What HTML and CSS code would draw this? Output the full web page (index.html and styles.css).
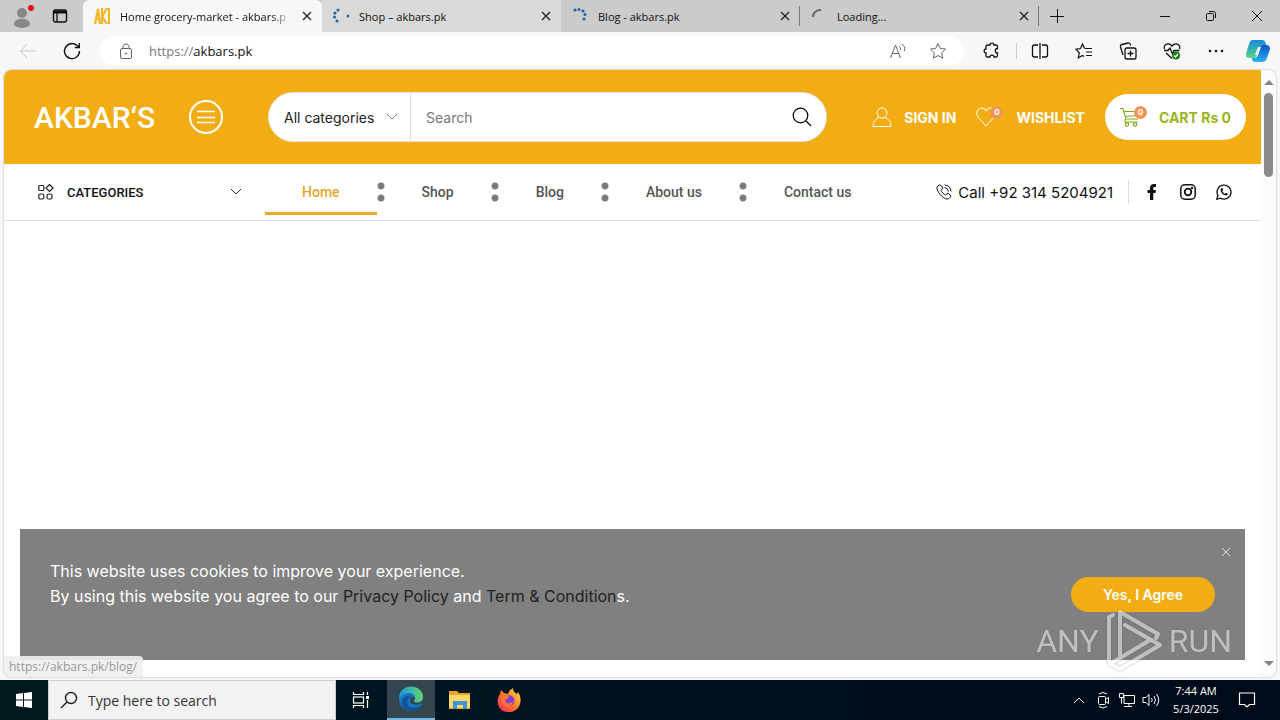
FILE: index.html
```
<!DOCTYPE html>
<html lang="en">
<head>
  <meta charset="UTF-8" />
  <meta name="viewport" content="width=device-width, initial-scale=1.0" />
  <title>Home grocery-market - akbars.pk</title>
  <link rel="stylesheet" href="styles.css">
</head>
<body>
  <!-- Tabs -->
  <div class="tabbar">
    <button class="profile" aria-label="Profile">
      <svg width="24" height="28" viewBox="0 0 24 28"><circle cx="12" cy="11" r="5" fill="#8a8785"/><path d="M4 22c0-7 16-7 16 0 0 5-16 5-16 0z" fill="#8a8785"/><circle cx="21" cy="6" r="3" fill="#e00b1c"/></svg>
    </button>
    <button class="workspaces" aria-label="Tab actions">
      <svg width="16" height="16" viewBox="0 0 16 16" fill="none" stroke="#111"><rect x="1.500" y="2" width="13" height="12" rx="2" stroke-width="1.400"/><path d="M2 4h12" stroke-width="3"/><path d="M5 4v10" stroke-width="1.300"/></svg>
    </button>
    <div class="tab active">
      <svg class="favicon" width="16" height="16" viewBox="0 0 16 16" fill="none" stroke="#f4b62a" stroke-width="2.200"><path d="M1 16 4 1l2 15M2 11h4M8 0v16M13 0 8 9l5 7M15 0v16"/></svg>
      <a href="#" class="tab-title fade">Home grocery-market - akbars.p</a>
      <button class="tab-close" aria-label="Close tab"><svg width="10" height="10" viewBox="0 0 10 10"><path d="M1 1l8 8M9 1l-8 8"/></svg></button>
    </div>
    <div class="tab hover">
      <svg class="favicon" width="16" height="16" viewBox="0 0 16 16" fill="#22639a"><circle cx="5" cy="2" r="1.500"/><circle cx="2" cy="5" r="1.600"/><circle cx="1.600" cy="9" r="1.500"/><circle cx="4" cy="13" r="1.500"/><circle cx="15" cy="8" r="1.500"/></svg>
      <a href="#" class="tab-title">Shop – akbars.pk</a>
      <button class="tab-close" aria-label="Close tab"><svg width="10" height="10" viewBox="0 0 10 10"><path d="M1 1l8 8M9 1l-8 8"/></svg></button>
    </div>
    <div class="tab line">
      <svg class="favicon" width="16" height="16" viewBox="0 0 16 16" fill="#1766a8"><circle cx="3" cy="2" r="1.600"/><circle cx="7" cy="1.600" r="1.500"/><circle cx="11" cy="3" r="1.600"/><circle cx="13" cy="6.500" r="1.500"/><circle cx="12" cy="11" r="1.500"/></svg>
      <a href="#" class="tab-title">Blog - akbars.pk</a>
      <button class="tab-close" aria-label="Close tab"><svg width="10" height="10" viewBox="0 0 10 10"><path d="M1 1l8 8M9 1l-8 8"/></svg></button>
    </div>
    <div class="tab line">
      <svg class="favicon" width="16" height="16" viewBox="0 0 16 16" fill="none" stroke="#666" stroke-width="2.200"><path d="M2 9c0-4 3-7 8-7"/></svg>
      <a href="#" class="tab-title">Loading...</a>
      <button class="tab-close" aria-label="Close tab"><svg width="10" height="10" viewBox="0 0 10 10"><path d="M1 1l8 8M9 1l-8 8"/></svg></button>
    </div>
    <button class="new-tab" aria-label="New tab"><svg width="14" height="14" viewBox="0 0 14 14" stroke="#111"><path d="M0 7.500h14M7.500 0v14"/></svg></button>
    <div class="window-buttons">
      <button aria-label="Minimize"><svg width="12" height="12" viewBox="0 0 12 12"><path d="M1 6.500h10"/></svg></button>
      <button aria-label="Restore"><svg width="12" height="12" viewBox="0 0 12 12"><rect x="1.500" y="3.500" width="7" height="7" rx="1"/><path d="M4 1.500h4.500q2 0 2 2V8"/></svg></button>
      <button aria-label="Close"><svg width="12" height="12" viewBox="0 0 12 12"><path d="M1 1l10 10M11 1 1 11"/></svg></button>
    </div>
  </div>

  <!-- Address bar -->
  <div class="toolbar">
    <button class="tool nav-btn" aria-label="Back"><svg width="18" height="16" viewBox="0 0 18 16" stroke="#c4c4c4"><path d="M17 8H2M8 1 1.500 8 8 15"/></svg></button>
    <button class="tool nav-btn" aria-label="Refresh"><svg width="18" height="18" viewBox="0 0 18 18" stroke-width="1.400"><path d="M16.500 9A7.500 7.500 0 1 1 14 3.500L16 5M16.300 1v4.500h-4.500"/></svg></button>
    <div class="address">
      <svg width="14" height="16" viewBox="0 0 14 16" fill="none" stroke="#666"><rect x="1.500" y="5.500" width="11" height="10" rx="1.500"/><path d="M4 5V4c0-4 6-4 6 0v1"/><circle cx="7" cy="10.500" r=".7"/></svg>
      <a href="#" class="url"><span>https://</span>akbars.pk</a>
      <button class="tool" aria-label="Read aloud"><svg width="18" height="16" viewBox="0 0 18 16" stroke="#666"><path d="M1.500 15 6.500 2l5 13M3.500 10.500h6M10 3q2 1 1.500 4M12.500 1q4 2 3 7"/></svg></button>
      <button class="tool" aria-label="Add to favorites"><svg width="18" height="18" viewBox="0 0 18 18" stroke="#666"><path d="m9 1.500 2.300 4.900 5.200.7-3.800 3.700.9 5.300L9 13.600l-4.600 2.500.9-5.300L1.500 7.100l5.200-.7z"/></svg></button>
    </div>
    <button class="tool" aria-label="Extensions"><svg width="18" height="18" viewBox="0 0 18 18" stroke-width="1.300"><path d="M4.500 3H7c0-2.500 4-2.500 4 0h2q1.500 0 1.500 1.500v2c-3 0-3 4.500 0 4.500v2.500q0 1.500-1.500 1.500h-2c0-2.500-4-2.500-4 0H4.500Q3 15 3 13.500V11c-2.500 0-2.500-4 0-4V4.500Q3 3 4.500 3z"/></svg></button>
    <span class="divider"></span>
    <button class="tool" aria-label="Split screen"><svg width="18" height="18" viewBox="0 0 18 18" stroke-width="1.300"><path d="M7 3H3.500Q1.500 3 1.500 5v8q0 2 2 2H7M11 3h3.500q2 0 2 2v8q0 2-2 2H11M9 1v16"/></svg></button>
    <button class="tool" aria-label="Favorites"><svg width="18" height="18" viewBox="0 0 18 18" stroke-width="1.200"><path d="M9.500 6.500 7.500 2l-2 4.500-4.500.8 3.300 3.500-1 5 4.200-2.300 1.500 1M10 6.500h7M11 10h6M11 13.500h6"/></svg></button>
    <button class="tool" aria-label="Collections"><svg width="18" height="18" viewBox="0 0 18 18" stroke-width="1.300"><rect x="6" y="6" width="11" height="11" rx="2"/><path d="M11.500 8.500v6M8.500 11.500h6M4 13 1.500 5q-.5-2 1.500-2.500L9 1q2-.5 2.800 2.500"/></svg></button>
    <button class="tool" aria-label="Browser essentials"><svg width="18" height="18" viewBox="0 0 18 18" stroke-width="1.300"><path d="M1.500 7C0 2 6 0 9 4c3-4 9-2 7.500 3M1 8.500h4L7 6l2.500 6L11 8.500h5.500M3 11l6 5.500"/><circle cx="13" cy="13.500" r="4" fill="#158015" stroke="none"/><path d="m11 13.500 1.500 1.500 2.500-3" stroke="#fff"/></svg></button>
    <button class="tool" aria-label="Settings and more"><svg width="18" height="18" viewBox="0 0 18 18" stroke="none"><g fill="#111"><circle cx="3" cy="9" r="1.300"/><circle cx="9" cy="9" r="1.300"/><circle cx="15" cy="9" r="1.300"/></g></svg></button>
    <button class="copilot" aria-label="Copilot">
      <svg width="24" height="22" viewBox="0 0 24 22"><defs><linearGradient id="cl" x2="0" y2="1"><stop stop-color="#1687d9"/><stop offset="1" stop-color="#5ad68b"/></linearGradient><linearGradient id="cr" x2="0" y2="1"><stop stop-color="#1250c4"/><stop offset="1" stop-color="#27b5f4"/></linearGradient></defs><path d="M7 0h9q3 0 4 4l1 3h-4q-3 0-4 3l-2 5q-1 3-4 3H3q-4 0-3-4L3 4q1-4 4-4z" fill="url(#cl)"/><path d="M17 5h3q4 0 4 4l-3 9q-1 4-5 4H9q-3 0-3-4h2q3 0 4-3l2-7q1-3 3-3z" fill="url(#cr)"/><path d="M12 7h3l-3 8H9z" fill="#e7f7ff"/></svg>
    </button>
  </div>

  <div class="browser-view">
    <div class="page">
      <header class="header">
        <a href="#" class="logo">AKBAR‘S</a>
        <button class="menu-btn" aria-label="Menu"><svg width="34" height="34" viewBox="0 0 34 34" fill="none" stroke="#fff"><circle cx="17" cy="17" r="16" stroke-width="2"/><path d="M8 11.500h18M8 17.500h18M8 22.500h18" stroke-width="1.300"/></svg></button>
        <form class="search">
          <label class="search-cat">
            <select aria-label="Category"><option>All categories</option></select>
            <svg width="12" height="8" viewBox="0 0 12 8" fill="none" stroke="#888"><path d="m1 1 5 5 5-5"/></svg>
          </label>
          <input type="text" placeholder="Search" aria-label="Search">
          <button type="button" aria-label="Search"><svg width="20" height="20" viewBox="0 0 20 20" fill="none" stroke="#000" stroke-width="1.200"><circle cx="8.500" cy="8.500" r="7.300"/><path d="m14 14 5 5"/></svg></button>
        </form>
        <a href="#" class="account">
          <svg width="20" height="20" viewBox="0 0 20 20" fill="none" stroke="#fff"><circle cx="10" cy="6" r="5"/><path d="M7 10.500C3 12 1 15 1 19.500h18c0-4.500-2-7.500-6-9"/></svg>
          Sign in
        </a>
        <a href="#" class="wishlist">
          <span class="icon-badge">
            <svg width="20" height="20" viewBox="0 0 20 20" fill="none" stroke="#fff"><path d="M10 19 2 10C-1 6 2 1 6 1q3 0 4 3 1-3 4-3c4 0 7 5 4 9z"/></svg>
            <span class="badge">0</span>
          </span>
          Wishlist
        </a>
        <a href="#" class="cart">
          <span class="icon-badge">
            <svg width="20" height="20" viewBox="0 0 20 20" fill="none" stroke="#86a820" stroke-width="1.200"><path d="M0 1.500h3l3 10.500h12M4 4.500h13v4L6 9.500M5 12v3h13"/><circle cx="7" cy="17.500" r="1.700"/><circle cx="15" cy="17.500" r="1.700"/></svg>
            <span class="badge">0</span>
          </span>
          <span>CART Rs 0</span>
        </a>
      </header>

      <nav class="navbar">
        <button class="categories">
          <svg width="16" height="16" viewBox="0 0 16 16" fill="none" stroke="#222" stroke-width="1.200"><rect x=".8" y="1.500" width="5" height="5" rx="1"/><path d="m11.500.5 3.500 3.500-3.500 3.500L8 4z"/><rect x=".8" y="10" width="5" height="5" rx="1.500"/><rect x="9" y="10" width="5" height="5" rx="1.500"/></svg>
          <span>CATEGORIES</span>
          <svg width="12" height="8" viewBox="0 0 12 8" fill="none" stroke="#222"><path d="m1 1 5 5 5-5"/></svg>
        </button>
        <ul class="menu">
          <li class="current"><a href="#">Home</a></li>
          <li><a href="#">Shop</a></li>
          <li><a href="#">Blog</a></li>
          <li><a href="#">About us</a></li>
          <li><a href="#">Contact us</a></li>
        </ul>
        <a href="#" class="phone">
          <svg width="16" height="16" viewBox="0 0 16 16" fill="none" stroke="#111"><path d="M3 1 1 3c-1 4 6 12 10 12 2 0 3-1 4-3l-3-3-2.500 2C8 10.500 5.500 8 5 6.500L7 4 4.500 1zM8.500 1q6 .5 6.500 6.500M8.500 3.500q3.500.5 4 4"/></svg>
          Call +92 314 5204921
        </a>
        <div class="social">
          <a href="#" aria-label="Facebook"><svg width="16" height="16" viewBox="0 0 16 16"><path d="M6 16V9H3.500V6H6V4c0-2.800 1.500-4 4-4h2v3h-1.500Q9.300 3 9.300 4.200V6H12l-.5 3H9.300v7z" fill="#111"/></svg></a>
          <a href="#" aria-label="Instagram"><svg width="16" height="16" viewBox="0 0 16 16" fill="none" stroke="#111" stroke-width="1.500"><rect x=".8" y=".8" width="14.400" height="14.400" rx="4"/><circle cx="8" cy="8" r="3.300" stroke-width="1.800"/><circle cx="12" cy="4" r=".5"/></svg></a>
          <a href="#" aria-label="WhatsApp"><svg width="16" height="16" viewBox="0 0 16 16" fill="none" stroke="#111" stroke-width="1.300"><path d="m.8 15.200 1.100-3.800a7 7 0 1 1 2.600 2.700z"/><path d="M5.500 4 4.500 5.500c0 3 3 6 6 6l1.500-1.500-2-1.200-1 1C8 9.500 6.800 8.200 6.300 7l.8-.9L6.300 4z" fill="#111" stroke="none"/></svg></a>
        </div>
      </nav>

      <div class="cookies">
        <button class="cookies-close" aria-label="Close"><svg width="8" height="8" viewBox="0 0 8 8" stroke="#ddd"><path d="m0 0 8 8M8 0 0 8"/></svg></button>
        <p>This website uses cookies to improve your experience.<br>By using this website you agree to our <a href="#">Privacy Policy</a> and <a href="#">Term &amp; Condition</a>s.</p>
        <button class="agree">Yes, I Agree</button>
      </div>
    </div>

    <div class="scrollbar">
      <svg width="10" height="6" viewBox="0 0 10 6"><path d="m0 6 5-5 5 5z" fill="#858585"/></svg>
      <span class="thumb"></span>
      <svg width="10" height="6" viewBox="0 0 10 6"><path d="m0 0 5 5 5-5z" fill="#858585"/></svg>
    </div>
    <div class="status">https://akbars.pk/blog/</div>
    <div class="watermark">
      <span>ANY</span>
      <svg width="56" height="64" viewBox="0 0 56 64" fill="none" stroke="#fff" stroke-width="4" stroke-linejoin="round" stroke-linecap="round"><path d="M7 6 3 8v44"/><path d="M14 46V3l38 22-2 4"/><path d="m19 16 35 20-40 24-10-5 40-24"/></svg>
      <span>RUN</span>
    </div>
  </div>

  <!-- Taskbar -->
  <div class="taskbar">
    <button class="start" aria-label="Start"><svg width="16" height="16" viewBox="0 0 16 16" fill="#fff"><path d="m0 2 7-1v6.500H0zM8 .9 16 0v7.500H8zM0 8.500h7V15l-7-1zM8 8.500h8V16l-8-1z"/></svg></button>
    <label class="task-search">
      <svg width="18" height="18" viewBox="0 0 18 18" fill="none" stroke="#222" stroke-width="1.400"><circle cx="11" cy="7" r="5.500"/><path d="m7 11-6 6"/></svg>
      <input type="text" placeholder="Type here to search">
    </label>
    <button aria-label="Task view"><svg width="18" height="18" viewBox="0 0 18 18" fill="none" stroke="#fff" stroke-width="1.200"><path d="M1.500 1v2.500h10V1M1.500 17v-2.500h10V17M15.500 1v3M15.500 9v8"/><rect x="1.500" y="6" width="10" height="6"/><path d="M14 6.500h3" stroke-width="3"/></svg></button>
    <button class="open" aria-label="Edge"><svg width="26" height="26" viewBox="0 0 26 26"><defs><linearGradient id="et"><stop stop-color="#2497dc"/><stop offset="1" stop-color="#5bd56c"/></linearGradient></defs><circle cx="13" cy="13" r="12" fill="#1676c6"/><path d="M1 12C2-4 25-2 25 11c0 5-6 7-9 5-1-1 1-2 1-4C17 6 7 5 1 12z" fill="url(#et)"/><path d="M10 13c-3 7 3 11 12 7-5 8-17 6-18-2-1-5 4-10 9-8q-2 1-3 3z" fill="#145296"/><path d="M13 11q-3 4 1 7 5 2 11-1v-3q-4 4-9 2-1-1 1-3 0-3-4-2z" fill="#33464f"/></svg></button>
    <button aria-label="File Explorer"><svg width="22" height="20" viewBox="0 0 22 20"><path d="M0 1h8l2 2h11v16H0z" fill="#e9a52b"/><path d="M0 5h21v13H0z" fill="#ffd866"/><path d="M4 19v-8h14v8h-4v-4H8v4z" fill="#3a96d8"/></svg></button>
    <button aria-label="Firefox"><svg width="24" height="24" viewBox="0 0 24 24"><defs><linearGradient id="ff" x1="1" x2="0" y2="1"><stop stop-color="#ffe34a"/><stop offset=".5" stop-color="#ff7a28"/><stop offset="1" stop-color="#ee1f6d"/></linearGradient></defs><path d="M3 6 4 2l3 3 4 1q1-4 5-6 0 4 4 6l1-2c6 9 1 19-8 20C3 25-3 15 3 6z" fill="url(#ff)"/><path d="M7 13c0-5 6-8 9-4 4 5-1 10-5 9q-4-1-4-5z" fill="#7b3fd1"/><path d="M4 8q5-3 8 1-1 2-3 2.500-2 2 1 3.500 4 1 6-2-1 6-6 6-7-2-6-11z" fill="#ff7139"/></svg></button>
    <div class="tray">
      <svg width="12" height="8" viewBox="0 0 12 8"><path d="m1 7 5-5 5 5"/></svg>
      <svg width="12" height="18" viewBox="0 0 12 18"><rect x="1.500" y="5.500" width="7" height="8" rx="1"/><path d="m8.500 8.500 3-2v6l-3-2M2 3q4-3 8 0M2 15.500q4 3 8 0"/></svg>
      <svg width="16" height="14" viewBox="0 0 16 14"><path d="M5 2.500h10.500v8H5zM10 10.500v3M5 13.500h8M.5.500h4v4h-4zM2.500 4.500v6"/></svg>
      <svg width="18" height="16" viewBox="0 0 18 16"><path d="M1 5.500h3l3-3v11l-3-3H1zM9.500 6q1.500 2 0 4M12 4q3 4 0 8M14.500 2q4.500 6 0 12"/></svg>
    </div>
    <div class="clock">7:44 AM<br>5/3/2025</div>
    <button class="notify" aria-label="Notifications"><svg width="18" height="18" viewBox="0 0 18 18" fill="none" stroke="#fff" stroke-width="1.200"><path d="M1.500 2h15v11.500h-5L9 16l-2.500-2.500h-5z"/></svg></button>
  </div>
</body>
</html>
```
FILE: styles.css
```
* {
  margin: 0;
  padding: 0;
  box-sizing: border-box;
}

body {
  height: 100vh;
  display: flex;
  flex-direction: column;
  overflow: hidden;
  background: #f7f7f7;
  font-family: "Open Sans", "Noto Sans", sans-serif;
  font-size: 12px;
  color: #111;
}

button {
  border: none;
  background: none;
  font: inherit;
  color: inherit;
  display: flex;
  align-items: center;
  justify-content: center;
  cursor: pointer;
}

a {
  color: inherit;
  text-decoration: none;
}

svg {
  flex: none;
}

/* tabs */
.tabbar {
  height: 32px;
  display: flex;
  background: #cbcbcb;
  font-size: 11px;
}

.profile {
  width: 44px;
}

.workspaces {
  width: 39px;
  padding-right: 7px;
}

.tab {
  flex: 0 1 239px;
  min-width: 0;
  display: flex;
  align-items: center;
  gap: 10px;
  padding: 0 10px 0 11px;
}

.tab.active {
  background: #f7f7f7;
  border-radius: 6px 6px 0 0;
}

.tab.hover {
  background: #d9d9d9;
}

.tab.line {
  background: linear-gradient(#777, #777) right center / 1px 20px no-repeat;
}

.tab-title {
  flex: 1;
  overflow: hidden;
  white-space: nowrap;
}

.fade {
  mask-image: linear-gradient(to right, #000 88%, transparent);
}

.tab-close svg {
  stroke: #222;
  stroke-width: 1.3;
}

.new-tab {
  width: 36px;
}

.window-buttons {
  display: flex;
  margin-left: auto;
}

.window-buttons button {
  width: 46px;
}

.window-buttons svg {
  fill: none;
  stroke: #111;
}

/* toolbar */
.toolbar {
  height: 38px;
  display: flex;
  align-items: center;
  padding: 0 6px;
}

.tool {
  width: 44px;
  height: 30px;
}

.tool svg {
  fill: none;
}

.tool svg:not([stroke]) {
  stroke: #111;
}

.address {
  flex: 1;
  height: 30px;
  margin: 0 6px;
  padding: 0 4px 0 19px;
  display: flex;
  align-items: center;
  gap: 16px;
  background: #fff;
  border-radius: 15px;
}

.address .tool {
  width: 24px;
}

.address .tool:last-child {
  margin-right: 10px;
}

.url {
  flex: 1;
  font-size: 13px;
}

.url span {
  color: #777;
}

.divider {
  width: 1px;
  height: 16px;
  margin: 0 1px 0 2px;
  background: #ccc;
}

.copilot {
  width: 32px;
  margin-left: 4px;
}

/* web page area */
.browser-view {
  flex: 1;
  min-height: 0;
  position: relative;
  display: flex;
  margin: 0 4px 3px;
  background: #fff;
  border-radius: 8px;
  overflow: hidden;
  box-shadow: 0 0 2px #999;
}

.page {
  flex: 1;
  min-width: 0;
  position: relative;
  font-family: Inter, sans-serif;
}

.header {
  height: 94px;
  display: flex;
  align-items: center;
  padding: 0 15px 0 30px;
  background: #f3ad14;
  color: #fff;
  font-size: 14px;
  font-weight: 700;
}

.logo {
  width: 121px;
  font-family: Roboto, sans-serif;
  font-size: 30px;
  font-weight: 500;
}

.menu-btn {
  margin: 0 45px 0 34px;
}

.search {
  flex: 1;
  min-width: 0;
  height: 50px;
  display: flex;
  background: #fff;
  border: 1px solid #e1e1e1;
  border-radius: 25px;
  overflow: hidden;
}

.search-cat {
  width: 142px;
  display: flex;
  align-items: center;
  padding: 0 12px 0 15px;
  border-right: 1px solid #ddd;
}

.search-cat select {
  flex: 1;
  min-width: 0;
  border: none;
  background: none;
  appearance: none;
  font: 400 14px Inter, sans-serif;
  color: #222;
}

.search input {
  flex: 1;
  min-width: 0;
  border: none;
  padding: 0 15px;
  font: 400 14px Inter, sans-serif;
}

.search input::placeholder {
  color: #777;
}

.search button {
  width: 48px;
}

.account,
.wishlist,
.cart {
  display: flex;
  align-items: center;
  white-space: nowrap;
}

.account {
  gap: 12px;
  margin-left: 45px;
  text-transform: uppercase;
}

.wishlist {
  gap: 20px;
  margin: 0 20px;
  text-transform: uppercase;
}

.icon-badge {
  position: relative;
  display: flex;
}

.badge {
  position: absolute;
  top: -1px;
  left: 14px;
  width: 13px;
  height: 13px;
  border-radius: 50%;
  background: #f39452;
  color: #fff;
  font-size: 8px;
  line-height: 13px;
  text-align: center;
}

.cart {
  height: 46px;
  gap: 19px;
  padding: 0 15px;
  border-radius: 23px;
  background: #fff;
  color: #9bb520;
}

/* nav row */
.navbar {
  height: 57px;
  display: flex;
  align-items: center;
  padding: 0 29px 0 34px;
  border-bottom: 1px solid #ddd;
}

.categories {
  width: 204px;
  gap: 13px;
  font-family: Roboto, sans-serif;
  font-size: 13px;
  font-weight: 500;
}

.categories span {
  flex: 1;
  text-align: left;
}

.menu {
  display: flex;
  list-style: none;
  margin-left: 23px;
  font-family: Roboto, sans-serif;
  font-size: 14px;
  font-weight: 500;
  color: #555;
}

.menu li {
  display: flex;
  align-items: center;
}

.menu a {
  padding: 3px 37px 0;
  line-height: 40px;
  border-bottom: 3px solid transparent;
  white-space: nowrap;
}

.menu .current a {
  color: #e5a52c;
  border-color: #e9ab28;
}

/* two dots between the links */
.menu li:not(:last-child)::after {
  content: "";
  width: 8px;
  height: 20px;
  background: radial-gradient(circle at 50% 50%, #7d7d7d 3px, transparent 4px) top / 8px 8px no-repeat,
    radial-gradient(circle at 50% 50%, #7d7d7d 3px, transparent 4px) bottom / 8px 8px no-repeat;
}

.phone {
  display: flex;
  align-items: center;
  gap: 6px;
  margin-left: auto;
  padding-right: 15px;
  font-size: 15px;
  white-space: nowrap;
}

.social {
  display: flex;
  gap: 20px;
  padding: 4px 0 4px 15px;
  border-left: 1px solid #ddd;
}

.social a {
  display: flex;
}

/* cookie notice */
.cookies {
  position: absolute;
  left: 16px;
  right: 16px;
  bottom: 17px;
  height: 131px;
  display: flex;
  align-items: center;
  justify-content: space-between;
  padding: 0 30px;
  background: #808080;
  color: #fff;
}

.cookies p {
  font-size: 16px;
  line-height: 25px;
  padding-bottom: 22px;
}

.cookies a {
  color: #222;
}

.cookies-close {
  position: absolute;
  top: 19px;
  right: 15px;
}

.agree {
  width: 144px;
  height: 35px;
  border-radius: 18px;
  background: #f3ad14;
  font-size: 14px;
  font-weight: 600;
}

.scrollbar {
  width: 15px;
  display: flex;
  flex-direction: column;
  align-items: center;
  padding: 9px 0 10px;
  background: #fbfbfb;
}

.thumb {
  width: 9px;
  height: 84px;
  margin: 8px 0 auto;
  border-radius: 5px;
  background: #8b8b8b;
}

.status {
  position: absolute;
  left: 0;
  bottom: 0;
  padding: 0 6px 0 5px;
  line-height: 21px;
  background: rgba(240, 240, 240, 0.9);
  border-radius: 0 4px 0 0;
  color: #999;
}

.watermark {
  position: absolute;
  right: 44px;
  bottom: 4px;
  display: flex;
  align-items: center;
  gap: 7px;
  color: #fff;
  opacity: 0.5;
  font-family: Roboto, sans-serif;
  font-size: 32px;
  filter: drop-shadow(0 0 1px #555);
  pointer-events: none;
}

/* taskbar */
.taskbar {
  height: 40px;
  display: flex;
  align-items: stretch;
  background: linear-gradient(to right, #001a22, #000a18);
  color: #fff;
}

.taskbar button {
  width: 49px;
}

.taskbar .start {
  width: 48px;
}

.taskbar .open {
  width: 48px;
  margin-left: 2px;
  background: #33464f;
  border-bottom: 2px solid #76b9ed;
}

.task-search {
  width: 288px;
  display: flex;
  align-items: center;
  gap: 10px;
  padding: 0 11px;
  background: #f2f2f2;
  border: 1px solid #ccc;
}

.task-search input {
  flex: 1;
  min-width: 0;
  border: none;
  background: none;
  font: inherit;
  font-size: 14px;
}

.task-search input::placeholder {
  color: #333;
}

.tray {
  display: grid;
  grid-template-columns: repeat(4, 24px);
  place-items: center;
  margin-left: auto;
}

.tray svg {
  fill: none;
  stroke: #fff;
}

.clock {
  width: 66px;
  text-align: center;
  font-size: 11px;
  line-height: 18px;
  padding-top: 2px;
}

.taskbar .notify {
  width: 36px;
  margin-right: 15px;
}
```
